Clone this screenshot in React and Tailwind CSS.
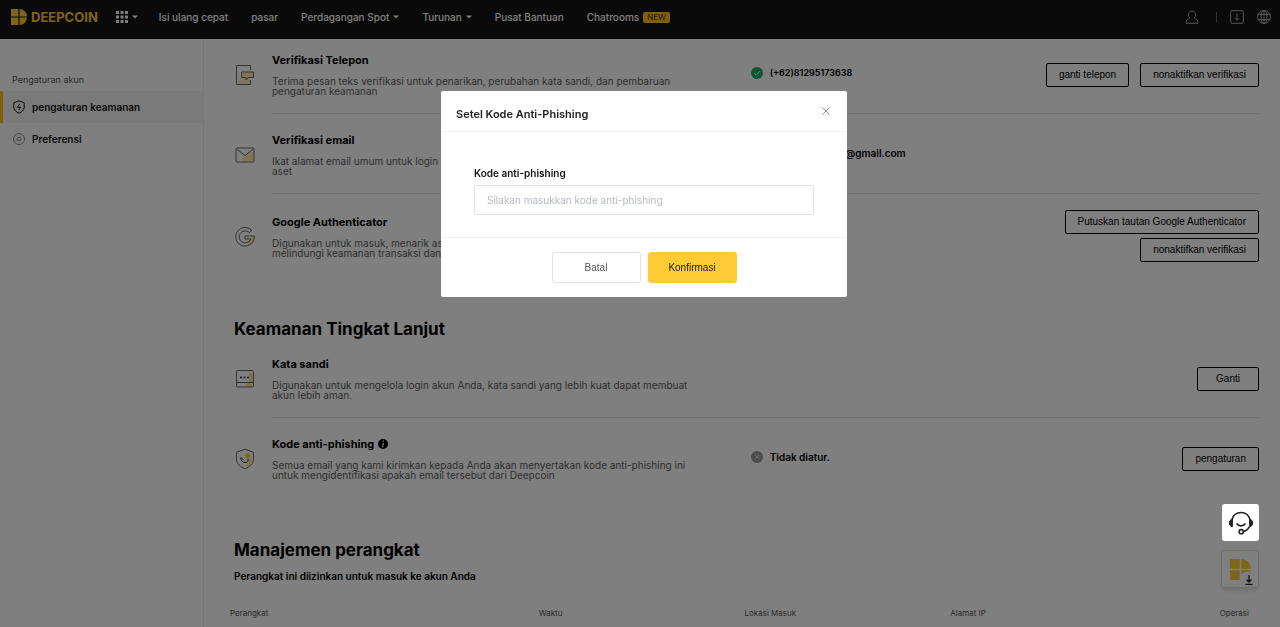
import { useState } from "react";

const navItems = [
  { label: "Isi ulang cepat" },
  { label: "pasar" },
  { label: "Perdagangan Spot", menu: true },
  { label: "Turunan", menu: true },
  { label: "Pusat Bantuan" },
  { label: "Chatrooms", badge: "NEW" },
];

const deviceColumns = [
  { label: "Perangkat", className: "w-[30%] text-left" },
  { label: "Waktu", className: "w-[20%] text-left" },
  { label: "Lokasi Masuk", className: "w-[20%] text-left" },
  { label: "Alamat IP", className: "w-[20%] text-left" },
  { label: "Operasi", className: "w-[10%] pr-[10px] text-right" },
];

function LogoMark({ className }) {
  return (
    <svg viewBox="0 0 16 16" className={className} fill="#ffcb34" aria-hidden="true">
      <path d="M0 0h7.4v7.4H0zM0 8.6h7.4V16H0zM8.6 0A7.4 7.4 0 0 1 16 7.4H8.6zM8.6 8.6H16A7.4 7.4 0 0 1 8.6 16z" />
    </svg>
  );
}

function Caret() {
  return (
    <svg viewBox="0 0 6 4" className="h-1 w-1.5" fill="#fff" aria-hidden="true">
      <path d="M0 .5h6L3 3.6z" />
    </svg>
  );
}

function PhoneIcon() {
  return (
    <svg viewBox="0 0 20 22" className="h-[22px] w-5" fill="none" stroke="#666" aria-hidden="true">
      <path d="M5 14h10v6H3z" fill="#fff0c0" stroke="none" />
      <path d="M15.5 6V1.5h-14v19h14V16" />
      <path d="M6.500 8h12v5.500h-5L11 16v-2.500H6.500z" fill="#ffe9a8" />
    </svg>
  );
}

function MailIcon() {
  return (
    <svg viewBox="0 0 20 16" className="h-4 w-5" fill="none" stroke="#666" aria-hidden="true">
      <path d="M7 10l3-1 5-4 4 1v8H7z" fill="#ffe9a8" stroke="none" />
      <rect x="1" y="1" width="18" height="14" rx="1" />
      <path d="M1.500 2l8.500 6.500L18.500 2" />
    </svg>
  );
}

function GoogleIcon() {
  return (
    <svg viewBox="0 0 20 20" className="size-5" fill="none" stroke="#666" aria-hidden="true">
      <path d="M12 15l7-6v6l-5 4z" fill="#ffe9a8" stroke="none" />
      <path d="M16.700 3.300A9.300 9.300 0 1 0 19.300 9H10v3h5.800a6 6 0 1 1-1.400-6.400z" />
    </svg>
  );
}

function PasswordIcon() {
  return (
    <svg viewBox="0 0 20 18" className="h-[18px] w-5" fill="none" stroke="#666" aria-hidden="true">
      <path d="M14 3h3.500v13H10l4-4z" fill="#ffe28a" stroke="none" />
      <rect x="1.500" y=".5" width="17" height="16.500" rx="1" />
      <path d="M1.500 12.500h17" />
      <path d="M5 7.500h2M8.500 7.500h2M12 7.500h2" stroke="#333" strokeWidth="1.500" />
    </svg>
  );
}

function ShieldIcon() {
  return (
    <svg viewBox="0 0 20 22" className="h-[22px] w-5" fill="none" stroke="#666" aria-hidden="true">
      <path d="M17 8v6l-5 5-1-3z" fill="#ffe28a" stroke="none" />
      <path d="M10 1.200l8.500 3v7c0 4.500-4 7.800-8.500 9.600-4.500-1.800-8.500-5.100-8.500-9.600v-7z" />
      <circle cx="12.500" cy="7.500" r="2.500" fill="#ffcb34" stroke="none" />
      <path d="M6 9.500c-.5 3 1.500 5 4 5s3.500-2 3-4M6 9.500l2.500 2.500" stroke="#333" />
    </svg>
  );
}

function StatusIcon({ ok }) {
  return (
    <svg viewBox="0 0 12 12" className="size-3 shrink-0" fill="none" stroke="#fff" aria-hidden="true">
      <circle cx="6" cy="6" r="6" fill={ok ? "#1fa866" : "#999"} stroke="none" />
      {ok ? <path d="M3.200 6.200l2 2 3.600-4" /> : <path d="M4 4l4 4M8 4L4 8" stroke="#ddd" />}
    </svg>
  );
}

function OutlineButton({ children, className = "" }) {
  return (
    <button
      type="button"
      className={`h-6 rounded-xs border border-black px-3 font-['Liberation_Sans',sans-serif] text-[10px] leading-4 whitespace-nowrap ${className}`}
    >
      {children}
    </button>
  );
}

function SecurityRow({ icon, title, info, text, status, ok, children, padding = "pt-[19px] pb-[17px]", last }) {
  return (
    <div className="flex pl-1">
      <div className={`flex w-[38px] shrink-0 items-center pl-px ${padding}`}>{icon}</div>
      <div
        className={`flex flex-1 items-center border-b ${last ? "border-transparent" : "border-[#e4e4e4]"} ${padding}`}
      >
        <div className="w-[48.5%] shrink-0">
          <h3 className="flex items-center gap-1 text-[11px] leading-[14px] font-bold text-black">
            {title}
            {info && (
              <svg viewBox="0 0 10 10" className="size-[10px]" aria-hidden="true">
                <circle cx="5" cy="5" r="5" fill="#000" />
                <path d="M5.300 2.200h.2M5.200 4.200L4.700 7.800" stroke="#fff" strokeWidth="1.200" strokeLinecap="round" />
              </svg>
            )}
          </h3>
          <p className="mt-[9px] text-[10px] leading-[10px] whitespace-pre text-[#5c5c5c]">{text}</p>
        </div>
        <div className="flex flex-1 items-center gap-[7px] pb-[3px] text-[10px] leading-[14px] font-semibold text-black">
          {status && (
            <>
              <StatusIcon ok={ok} />
              {status}
            </>
          )}
        </div>
        {children}
      </div>
    </div>
  );
}

function TopBar() {
  return (
    <header className="flex h-[39px] items-center bg-[#141414] pr-[9px] pb-[5px] pl-[11px] text-[10px] font-medium text-white">
      <a href="#" className="flex items-center gap-1 text-[13px] leading-4 font-bold text-[#ffcb34]">
        <LogoMark className="size-4" />
        DEEPCOIN
      </a>
      <button type="button" aria-label="Produk" className="ml-[18px] flex items-center gap-1">
        <svg viewBox="0 0 12 12" className="size-3" fill="#fff" aria-hidden="true">
          <path d="M0 0h3v3H0zM4.500 0h3v3h-3zM9 0h3v3H9zM0 4.500h3v3H0zM4.500 4.500h3v3h-3zM9 4.500h3v3H9zM0 9h3v3H0zM4.500 9h3v3h-3zM9 9h3v3H9z" />
        </svg>
        <Caret />
      </button>
      <nav className="ml-[21px] flex items-center gap-[23px]">
        {navItems.map((item) => (
          <a key={item.label} href="#" className="flex items-center gap-1 whitespace-nowrap">
            {item.label}
            {item.menu && <Caret />}
            {item.badge && (
              <span className="rounded-xs bg-[#ffc107] px-1 text-[8px] leading-[11px] font-medium text-[#5c4400]">
                {item.badge}
              </span>
            )}
          </a>
        ))}
      </nav>
      <div className="ml-auto flex items-center gap-[13px]">
        <button type="button" aria-label="Akun" className="mr-1">
          <svg viewBox="0 0 14 14" className="size-[14px]" fill="none" stroke="#aaa" aria-hidden="true">
            <path d="M4.800 7.800A3.700 3.700 0 1 1 9.200 7.800L12.300 10.200c.4.400.5.800.5 1.300v1.800H1.200v-1.800c0-.5.100-.9.500-1.300z" />
          </svg>
        </button>
        <span className="h-[10px] w-px bg-[#666]" />
        <button type="button" aria-label="Unduh">
          <svg viewBox="0 0 14 14" className="size-[14px]" fill="none" stroke="#aaa" aria-hidden="true">
            <rect x=".7" y=".7" width="12.600" height="12.600" rx="1" />
            <path d="M7 3v7M4.800 8L7 10.300 9.200 8" />
          </svg>
        </button>
        <button type="button" aria-label="Bahasa">
          <svg viewBox="0 0 14 14" className="size-[14px]" fill="none" stroke="#aaa" aria-hidden="true">
            <circle cx="7" cy="7" r="6.400" />
            <ellipse cx="7" cy="7" rx="3" ry="6.400" />
            <path d="M1.300 4.500h11.400M1.300 9.500h11.400M7 .6v12.800" />
          </svg>
        </button>
      </div>
    </header>
  );
}

function Sidebar() {
  return (
    <aside className="w-[204px] shrink-0 border-r border-[#ececec] pt-[34px]">
      <h2 className="pl-3 text-[9px] leading-[14px] text-[#555]">Pengaturan akun</h2>
      <nav className="mt-1 text-[10px] font-semibold text-[#111]">
        <a href="#" className="flex h-8 items-center gap-[7px] border-l-3 border-[#ffc107] bg-[#f5f5f5] pl-[10px]">
          <svg viewBox="0 0 12 14" className="h-[14px] w-3" fill="none" stroke="#111" aria-hidden="true">
            <path d="M6 .8l5.200 2v4.500c0 2.700-2.400 4.700-5.200 5.900C3.200 12 .8 10 .8 7.300V2.800z" />
            <path d="M6.500 4L4.500 7.300h3L5.800 10" />
          </svg>
          pengaturan keamanan
        </a>
        <a href="#" className="flex h-8 items-center gap-[7px] border-l-3 border-transparent pl-[10px]">
          <svg viewBox="0 0 12 12" className="size-3" fill="none" stroke="#888" aria-hidden="true">
            <circle cx="6" cy="6" r="5.500" />
            <rect x="4" y="4.400" width="4" height="3.200" rx="1" />
          </svg>
          Preferensi
        </a>
      </nav>
    </aside>
  );
}

function AntiPhishingDialog({ onClose }) {
  const [code, setCode] = useState("");

  return (
    <div className="fixed inset-0 z-20 flex items-start justify-center bg-black/50 pt-[91px] pl-2">
      <form
        role="dialog"
        aria-labelledby="dialog-title"
        onSubmit={(e) => e.preventDefault()}
        className="w-full max-w-[406px] rounded-xs bg-white"
      >
        <div className="flex h-[41px] items-center justify-between border-b border-[#eef1f3] pr-4 pl-[15px]">
          <h2 id="dialog-title" className="pt-[6px] text-[11px] leading-4 font-semibold text-[#222]">
            Setel Kode Anti-Phishing
          </h2>
          <button type="button" aria-label="Tutup" onClick={onClose}>
            <svg viewBox="0 0 10 10" className="size-[10px]" fill="none" stroke="#909399" aria-hidden="true">
              <path d="M1.500 1.500l7 7M8.500 1.500l-7 7" />
            </svg>
          </button>
        </div>
        <div className="px-[33px] pt-[34px] pb-[22px]">
          <label htmlFor="anti-code" className="block text-[10px] leading-[14px] font-semibold text-[#111]">
            Kode anti-phishing
          </label>
          <input
            id="anti-code"
            type="text"
            value={code}
            onChange={(e) => setCode(e.target.value)}
            placeholder="Silakan masukkan kode anti-phishing"
            className="mt-[5px] block h-[30px] w-full rounded-xs border border-[#dfe2e8] px-3 text-[10px] text-[#333] outline-none placeholder:text-[#b4b8c2]"
          />
        </div>
        <div className="flex justify-center gap-[7px] border-t border-[#ebeef5] py-[14px] font-['Liberation_Sans',sans-serif] text-[10px]">
          <button
            type="button"
            onClick={onClose}
            className="h-[31px] w-[89px] rounded-[3px] border border-[#dfe2e8] text-[#555]"
          >
            Batal
          </button>
          <button type="submit" className="h-[31px] w-[89px] rounded-[3px] bg-[#fecb35] text-[#222]">
            Konfirmasi
          </button>
        </div>
      </form>
    </div>
  );
}

export default function App() {
  const [open, setOpen] = useState(true);

  return (
    <div className="flex min-h-screen flex-col bg-white font-[Inter,sans-serif]">
      <TopBar />
      <div className="flex flex-1">
        <Sidebar />
        <main className="min-w-0 flex-1 pr-[21px] pl-[26px]">
          <SecurityRow
            icon={<PhoneIcon />}
            title="Verifikasi Telepon"
            text={"Terima pesan teks verifikasi untuk penarikan, perubahan kata sandi, dan pembaruan\npengaturan keamanan"}
            status={<span className="text-[9px]">(+62)81295173638</span>}
            ok
            padding="pt-[14px] pb-[17px]"
          >
            <div className="flex gap-[11px]">
              <OutlineButton>ganti telepon</OutlineButton>
              <OutlineButton>nonaktifkan verifikasi</OutlineButton>
            </div>
          </SecurityRow>
          <SecurityRow
            icon={<MailIcon />}
            title="Verifikasi email"
            text={"Ikat alamat email umum untuk login dan\naset"}
            status="pengguna*****@gmail.com"
            ok
          />
          <SecurityRow
            icon={<GoogleIcon />}
            title="Google Authenticator"
            text={"Digunakan untuk masuk, menarik aset, dan\nmelindungi keamanan transaksi dan aset"}
            padding="pt-4 pb-[13px]"
            last
          >
            <div className="flex flex-col items-end gap-1">
              <OutlineButton>Putuskan tautan Google Authenticator</OutlineButton>
              <OutlineButton>nonaktifkan verifikasi</OutlineButton>
            </div>
          </SecurityRow>

          <h2 className="mt-[41px] pl-1 text-[17px] leading-6 font-bold text-black">Keamanan Tingkat Lanjut</h2>
          <SecurityRow
            icon={<PasswordIcon />}
            title="Kata sandi"
            text={"Digunakan untuk mengelola login akun Anda, kata sandi yang lebih kuat dapat membuat\nakun lebih aman."}
            padding="pt-4 pb-[17px]"
          >
            <OutlineButton className="min-w-[62px]">Ganti</OutlineButton>
          </SecurityRow>
          <SecurityRow
            icon={<ShieldIcon />}
            title="Kode anti-phishing"
            info
            text={"Semua email yang kami kirimkan kepada Anda akan menyertakan kode anti-phishing ini\nuntuk mengidentifikasi apakah email tersebut dari Deepcoin"}
            status="Tidak diatur."
            last
          >
            <OutlineButton>pengaturan</OutlineButton>
          </SecurityRow>

          <h2 className="mt-10 pl-1 text-[17px] leading-6 font-bold text-black">Manajemen perangkat</h2>
          <p className="mt-[7px] pl-1 text-[10px] leading-[14px] font-semibold text-black">
            Perangkat ini diizinkan untuk masuk ke akun Anda
          </p>
          <table className="mt-[23px] w-full table-fixed text-[8px] leading-[14px] text-[#555]">
            <thead>
              <tr>
                {deviceColumns.map((col) => (
                  <th key={col.label} className={`font-normal ${col.className}`}>
                    {col.label}
                  </th>
                ))}
              </tr>
            </thead>
          </table>
        </main>
      </div>

      <button
        type="button"
        aria-label="Unduh aplikasi"
        className="fixed right-[21px] bottom-[39px] z-10 flex size-[38px] items-center justify-center rounded-xs border border-[#ddd] bg-white shadow-md"
      >
        <LogoMark className="size-[21px]" />
        <span className="absolute right-0 bottom-0 flex h-[15px] w-[18px] items-center justify-center rounded-tl-md bg-white">
          <svg viewBox="0 0 8 10" className="h-[10px] w-2" fill="none" stroke="#222" aria-hidden="true">
            <path d="M4 0v7M1.500 4.500L4 7l2.500-2.500M.5 9.300h7" strokeWidth="1.300" />
          </svg>
        </span>
      </button>
      <button
        type="button"
        aria-label="Layanan pelanggan"
        className="fixed right-[21px] bottom-[86px] z-30 flex size-[37px] items-center justify-center rounded-[3px] bg-white"
      >
        <svg viewBox="0 0 26 24" className="h-6 w-[26px]" fill="none" stroke="#222" strokeWidth="1.600" aria-hidden="true">
          <path d="M4 8.500C5.200 4.300 8.700 1.500 13 1.500s7.800 2.800 9 7" />
          <path d="M4.500 8C2.500 8.500 1.300 10 1.300 12s1.200 3.300 3 3.800zM21.500 8c2 .5 3.200 2 3.200 4s-1.200 3.300-3 3.800z" fill="#222" strokeWidth="1" />
          <path d="M21.500 15.500c-1.200 2.700-3.500 4.500-6 5.200" />
          <circle cx="13.200" cy="20.700" r="2.100" />
          <path d="M8.500 12.500c1.200 1.600 2.700 2.400 4.500 2.400s3.300-.8 4.500-2.400" />
        </svg>
      </button>

      {open && <AntiPhishingDialog onClose={() => setOpen(false)} />}
    </div>
  );
}
